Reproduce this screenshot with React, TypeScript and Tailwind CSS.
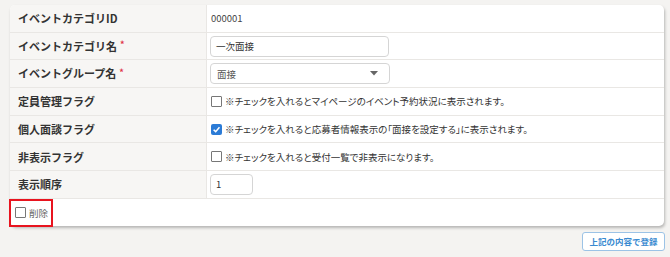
import React from "react"

const font = { fontFamily: '"Noto Sans CJK JP", "Noto Sans", sans-serif' }

function Box({ checked = false }: { checked?: boolean }): React.ReactElement {
	if (checked) {
		return (
			<span className="inline-flex w-[11px] h-[11px] shrink-0 items-center justify-center rounded-[2px] bg-[#2b7bd6]">
				<svg width="9" height="9" viewBox="0 0 10 10">
					<path d="M1.8 5.2 L4.1 7.4 L8.3 2.6" fill="none" stroke="#fff" strokeWidth="1.7" />
				</svg>
			</span>
		)
	}
	return <span className="inline-block w-[11px] h-[11px] shrink-0 rounded-[1px] border border-[#777] bg-white" />
}

function Row({ label, required = false, children }: { label: string; required?: boolean; children: React.ReactNode }): React.ReactElement {
	return (
		<div className="grid grid-cols-[197px_1fr] h-[27.7px] border-b border-[#e9e7e4]">
			<div className="flex items-center pl-[8px] bg-[#f7f6f4] border-r border-[#e9e7e4] text-[11px] font-bold text-[#333]">
				{label}
				{required && <span className="ml-[3px] text-[#e0334a] text-[9px] -mt-[2px]">*</span>}
			</div>
			<div className="flex items-center pl-[3px] text-[9.5px] text-[#333] whitespace-nowrap [font-feature-settings:'palt']">{children}</div>
		</div>
	)
}

export default function App(): React.ReactElement {
	return (
		<div className="w-[670px] h-[257px] bg-[#f4f3f1] overflow-hidden pt-[5px]" style={font}>
			<div className="ml-[10px] w-[654px] bg-white rounded-[5px] shadow-[1px_2px_3px_rgba(0,0,0,0.25)]">
				<div className="rounded-t-[5px] overflow-hidden">
					<Row label="イベントカテゴリID">
						<span className="pl-[1px] text-[9.5px] text-[#444]">000001</span>
					</Row>
					<Row label="イベントカテゴリ名" required>
						<div className="flex items-center w-[179px] h-[21px] rounded-[4px] border border-[#d5d5d5] px-[5px] text-[9.5px]">一次面接</div>
					</Row>
					<Row label="イベントグループ名" required>
						<div className="flex items-center justify-between w-[180px] h-[21px] rounded-[4px] border border-[#d5d5d5] pl-[6px] pr-[11px] text-[9.5px] text-[#555]">
							<span>面接</span>
							<svg width="8" height="5" viewBox="0 0 8 5">
								<path d="M0 0 H8 L4 4.5 Z" fill="#666" />
							</svg>
						</div>
					</Row>
					<Row label="定員管理フラグ">
						<label className="flex items-center gap-[3px] pl-[1px]">
							<Box />
							<span>※チェックを入れるとマイページのイベント予約状況に表示されます。</span>
						</label>
					</Row>
					<Row label="個人面談フラグ">
						<label className="flex items-center gap-[3px] pl-[1px]">
							<Box checked />
							<span>※チェックを入れると応募者情報表示の「面接を設定する」に表示されます。</span>
						</label>
					</Row>
					<Row label="非表示フラグ">
						<label className="flex items-center gap-[3px] pl-[1px]">
							<Box />
							<span>※チェックを入れると受付一覧で非表示になります。</span>
						</label>
					</Row>
					<Row label="表示順序">
						<div className="flex items-center w-[43px] h-[21px] rounded-[4px] border border-[#d5d5d5] px-[5px] text-[9.5px]">1</div>
					</Row>
				</div>
				<div className="h-[27px] flex">
					<div className="flex items-center gap-[3px] w-[44px] h-[28px] -ml-[1px] border-2 border-[#e8141f] pl-[4px] text-[9.5px] text-[#666] whitespace-nowrap">
						<Box />
						<span>削除</span>
					</div>
				</div>
			</div>
			<div className="flex justify-end pr-[5px] pt-[6px]">
				<button className="h-[19px] w-[83px] rounded-[3px] border border-[#9cc3e6] bg-white text-[8.5px] font-bold text-[#3a8ad0] whitespace-nowrap">
					上記の内容で登録
				</button>
			</div>
		</div>
	)
}
